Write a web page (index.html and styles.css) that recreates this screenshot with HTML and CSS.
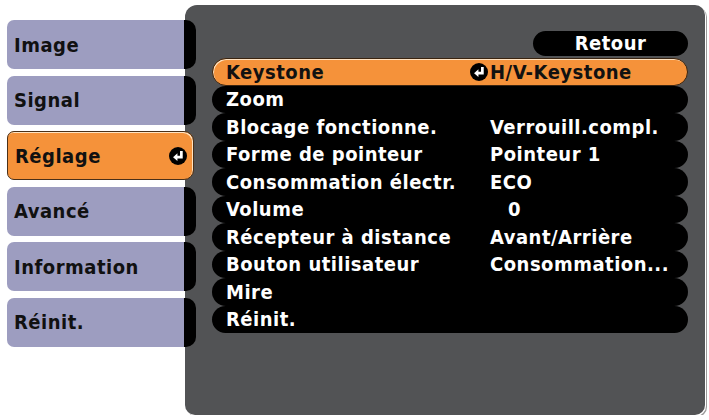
FILE: index.html
```html
<!DOCTYPE html>
<html lang="fr">
<head>
    <meta charset="UTF-8">
    <title>Réglage</title>
    <link rel="stylesheet" href="styles.css">
</head>
<body>
    <div class="screen">
        <div class="nav">
            <div class="tab">Image</div>
            <div class="tab">Signal</div>
            <div class="tab active">Réglage
                <svg class="enter" viewBox="0 0 16 16"><circle cx="8" cy="8" r="8"/><path d="M11 3.5 V9 H5.5" /><polygon points="7.5,5.6 3.6,9 7.5,12.4" /></svg>
            </div>
            <div class="tab">Avancé</div>
            <div class="tab">Information</div>
            <div class="tab">Réinit.</div>
        </div>
        <div class="panel">
            <div class="back-row"><span class="back">Retour</span></div>
            <div class="row selected">
                <span class="label">Keystone</span>
                <span class="value"><svg class="enter" viewBox="0 0 16 16"><circle cx="8" cy="8" r="8"/><path d="M11 3.5 V9 H5.5" /><polygon points="7.5,5.6 3.6,9 7.5,12.4" /></svg>H/V-Keystone</span>
            </div>
            <div class="row"><span class="label">Zoom</span><span class="value"></span></div>
            <div class="row"><span class="label">Blocage fonctionne.</span><span class="value">Verrouill.compl.</span></div>
            <div class="row"><span class="label">Forme de pointeur</span><span class="value">Pointeur 1</span></div>
            <div class="row"><span class="label">Consommation électr.</span><span class="value">ECO</span></div>
            <div class="row"><span class="label">Volume</span><span class="value num">0</span></div>
            <div class="row"><span class="label">Récepteur à distance</span><span class="value">Avant/Arrière</span></div>
            <div class="row"><span class="label">Bouton utilisateur</span><span class="value">Consommation...</span></div>
            <div class="row"><span class="label">Mire</span><span class="value"></span></div>
            <div class="row"><span class="label">Réinit.</span><span class="value"></span></div>
        </div>
    </div>
</body>
</html>
```

FILE: styles.css
```css
body {
    margin: 0;
    background: #fff;
    font-family: "DejaVu Sans Condensed", "DejaVu Sans", sans-serif;
    font-weight: bold;
}

.screen {
    display: flex;
    padding: 5px 0 0 7px;
}

.nav {
    width: 189px;
    padding-top: 15px;
    display: flex;
    flex-direction: column;
    gap: 6.5px;
    z-index: 1;
}

.tab {
    height: 49px;
    display: flex;
    align-items: center;
    justify-content: space-between;
    padding: 0 6px 0 7px;
    box-sizing: border-box;
    font-size: 20px;
    letter-spacing: 0.5px;
    color: #111;
    border-radius: 7px 10px 10px 7px;
    background: linear-gradient(to right, #9d9dc0 177px, #000 177px);
}

.tab.active {
    background: #f5923a;
    width: 187px;
    border: 1px solid #4a3018;
    box-shadow: inset -1px 1px 0 #ffe3c2;
}

.enter {
    width: 18px;
    height: 18px;
    flex-shrink: 0;
}

.enter circle {
    fill: #000;
}

.enter path {
    fill: none;
    stroke: #fff;
    stroke-width: 2.4;
}

.enter polygon {
    fill: #fff;
}

.panel {
    margin-left: -11px;
    width: 520px;
    height: 410px;
    box-sizing: border-box;
    padding: 26px 0 0 27px;
    background: #525355;
    border-radius: 12px 10px 10px 10px;
    box-shadow: 1px 1px 0 #fff, 2px 2px 0 #9a9a9a;
}

.back-row {
    width: 476px;
    display: flex;
    justify-content: flex-end;
    margin-bottom: 2px;
}

.back {
    width: 155px;
    height: 25px;
    line-height: 25px;
    border-radius: 13px;
    background: #000;
    color: #fff;
    text-align: center;
    font-size: 20px;
    letter-spacing: 0.5px;
}

.row {
    width: 476px;
    height: 27.5px;
    box-sizing: border-box;
    display: flex;
    align-items: center;
    padding-left: 14px;
    border-radius: 14px;
    background: #000;
    color: #fff;
    font-size: 20px;
    letter-spacing: 0.5px;
    white-space: nowrap;
}

.row.selected {
    background: #f5923a;
    color: #111;
    border: 1px solid #3a2410;
    box-shadow: inset 1px 1px 0 #ffe3c2;
    padding-left: 13px;
}

.label {
    width: 264px;
}

.value {
    display: flex;
    align-items: center;
}

.value .enter {
    margin-left: -20px;
    margin-right: 2px;
}

.num {
    padding-left: 18px;
}
```
